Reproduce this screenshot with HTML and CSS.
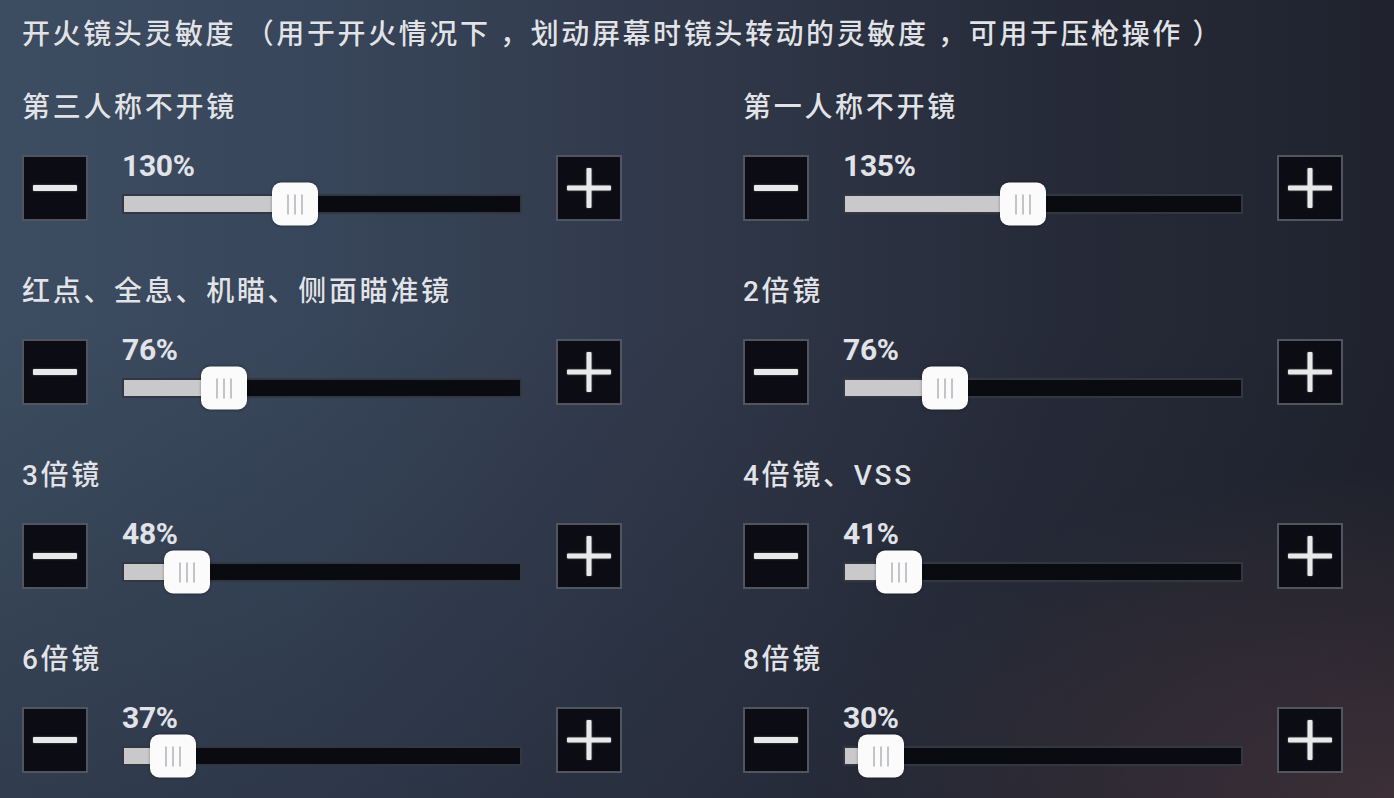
FILE: index.html
```html
<!DOCTYPE html>
<html>
<head>
  <meta charset="utf-8">
  <link rel="stylesheet" href="styles.css">
</head>
<body>
  <div class="sens_panel">
    <div class="sens-title">开火镜头灵敏度 （用于开火情况下 ，划动屏幕时镜头转动的灵敏度 ，可用于压枪操作 ）</div>

    <div class="sens-grid">
      <div class="sens-item">
        <div class="sens-label">第三人称不开镜</div>
        <div class="sens-row">
          <div class="step-btn minus"></div>
          <div class="slider">
            <div class="slider-value">130%</div>
            <div class="slider-track" style="--v: 43.3%">
              <div class="slider-fill"></div>
              <div class="slider-thumb"><span></span><span></span><span></span></div>
            </div>
          </div>
          <div class="step-btn plus"></div>
        </div>
      </div>

      <div class="sens-item">
        <div class="sens-label">第一人称不开镜</div>
        <div class="sens-row">
          <div class="step-btn minus"></div>
          <div class="slider">
            <div class="slider-value">135%</div>
            <div class="slider-track" style="--v: 45%">
              <div class="slider-fill"></div>
              <div class="slider-thumb"><span></span><span></span><span></span></div>
            </div>
          </div>
          <div class="step-btn plus"></div>
        </div>
      </div>

      <div class="sens-item">
        <div class="sens-label">红点、全息、机瞄、侧面瞄准镜</div>
        <div class="sens-row">
          <div class="step-btn minus"></div>
          <div class="slider">
            <div class="slider-value">76%</div>
            <div class="slider-track" style="--v: 25.3%">
              <div class="slider-fill"></div>
              <div class="slider-thumb"><span></span><span></span><span></span></div>
            </div>
          </div>
          <div class="step-btn plus"></div>
        </div>
      </div>

      <div class="sens-item">
        <div class="sens-label">2倍镜</div>
        <div class="sens-row">
          <div class="step-btn minus"></div>
          <div class="slider">
            <div class="slider-value">76%</div>
            <div class="slider-track" style="--v: 25.3%">
              <div class="slider-fill"></div>
              <div class="slider-thumb"><span></span><span></span><span></span></div>
            </div>
          </div>
          <div class="step-btn plus"></div>
        </div>
      </div>

      <div class="sens-item">
        <div class="sens-label">3倍镜</div>
        <div class="sens-row">
          <div class="step-btn minus"></div>
          <div class="slider">
            <div class="slider-value">48%</div>
            <div class="slider-track" style="--v: 16%">
              <div class="slider-fill"></div>
              <div class="slider-thumb"><span></span><span></span><span></span></div>
            </div>
          </div>
          <div class="step-btn plus"></div>
        </div>
      </div>

      <div class="sens-item">
        <div class="sens-label">4倍镜、VSS</div>
        <div class="sens-row">
          <div class="step-btn minus"></div>
          <div class="slider">
            <div class="slider-value">41%</div>
            <div class="slider-track" style="--v: 13.7%">
              <div class="slider-fill"></div>
              <div class="slider-thumb"><span></span><span></span><span></span></div>
            </div>
          </div>
          <div class="step-btn plus"></div>
        </div>
      </div>

      <div class="sens-item">
        <div class="sens-label">6倍镜</div>
        <div class="sens-row">
          <div class="step-btn minus"></div>
          <div class="slider">
            <div class="slider-value">37%</div>
            <div class="slider-track" style="--v: 12.3%">
              <div class="slider-fill"></div>
              <div class="slider-thumb"><span></span><span></span><span></span></div>
            </div>
          </div>
          <div class="step-btn plus"></div>
        </div>
      </div>

      <div class="sens-item">
        <div class="sens-label">8倍镜</div>
        <div class="sens-row">
          <div class="step-btn minus"></div>
          <div class="slider">
            <div class="slider-value">30%</div>
            <div class="slider-track" style="--v: 9%">
              <div class="slider-fill"></div>
              <div class="slider-thumb"><span></span><span></span><span></span></div>
            </div>
          </div>
          <div class="step-btn plus"></div>
        </div>
      </div>
    </div>
  </div>
</body>
</html>
```

FILE: styles.css
```css
/* Общие стили */
html,
body {
  margin: 0;
  height: 100%;
}

body {
  overflow: hidden;
  font-family: "Noto Sans CJK SC", "Noto Sans", sans-serif;
  color: #e1e3e8;
  background:
    radial-gradient(ellipse 55% 55% at 100% 100%, rgba(74, 54, 60, 0.7), rgba(74, 54, 60, 0) 75%),
    linear-gradient(to bottom, rgba(20, 22, 32, 0) 40%, rgba(20, 22, 32, 0.3) 100%),
    linear-gradient(to right, #3d4d61 0%, #38465b 22%, #303849 50%, #262b39 75%, #20232e 100%);
}

/* Панель чувствительности */
.sens_panel {
  padding: 15px 0 0 22px;
}

.sens_panel .sens-title {
  font-family: Roboto, "Noto Sans CJK SC", sans-serif;
  font-size: 28px;
  font-weight: 500;
  line-height: 40px;
  letter-spacing: 2.6px;
  white-space: nowrap;
  text-shadow: 0 0 1px rgba(0, 0, 0, 0.4);
}

.sens_panel .sens-grid {
  display: grid;
  grid-template-columns: 721px 1fr;
  row-gap: 51px;
  margin-top: 33px;
}

.sens_panel .sens-label {
  font-family: Roboto, "Noto Sans CJK SC", sans-serif;
  font-size: 28px;
  font-weight: 500;
  line-height: 40px;
  letter-spacing: 2.7px;
  white-space: nowrap;
  text-shadow: 0 0 1px rgba(0, 0, 0, 0.4);
}

.sens_panel .sens-row {
  display: flex;
  align-items: flex-start;
  gap: 34px;
  margin-top: 21px;
}

/* Кнопки плюс / минус */
.sens_panel .step-btn {
  position: relative;
  flex: none;
  width: 62px;
  height: 62px;
  margin-top: 6px;
  background-color: #0c0d14;
  border: 2px solid rgba(150, 158, 172, 0.5);
}

.sens_panel .step-btn::before,
.sens_panel .step-btn::after {
  content: "";
  position: absolute;
  left: 50%;
  top: 50%;
  background-color: #e9e9ea;
  border-radius: 1px;
  box-shadow: 0 0 2px rgba(255, 255, 255, 0.4);
}

.sens_panel .step-btn::before {
  width: 44px;
  height: 6px;
  transform: translate(-50%, -50%);
}

.sens_panel .minus::after {
  display: none;
}

.sens_panel .plus::before {
  height: 5px;
}

.sens_panel .plus::after {
  width: 5px;
  height: 40px;
  transform: translate(-50%, -50%);
}

/* Ползунок */
.sens_panel .slider {
  width: 400px;
}

.sens_panel .slider-value {
  font-family: Roboto, "Liberation Sans", sans-serif;
  font-weight: 700;
  font-size: 30px;
  line-height: 33px;
  letter-spacing: -0.3px;
}

.sens_panel .slider-track {
  position: relative;
  height: 16px;
  margin-top: 12px;
  background-color: #0a0b11;
  border: 2px solid rgba(130, 138, 152, 0.35);
}

.sens_panel .slider-fill {
  width: var(--v);
  height: 100%;
  background-color: #c9c9cb;
}

.sens_panel .slider-thumb {
  position: absolute;
  top: 50%;
  left: calc(var(--v) - 23px);
  display: flex;
  justify-content: center;
  align-items: center;
  gap: 5px;
  width: 46px;
  height: 43px;
  transform: translateY(-50%);
  background-color: #fbfbfb;
  border-radius: 9px;
  box-shadow: 0 0 3px rgba(0, 0, 0, 0.35);
}

.sens_panel .slider-thumb span {
  width: 2px;
  height: 20px;
  background-color: #c4c4c8;
}
```
